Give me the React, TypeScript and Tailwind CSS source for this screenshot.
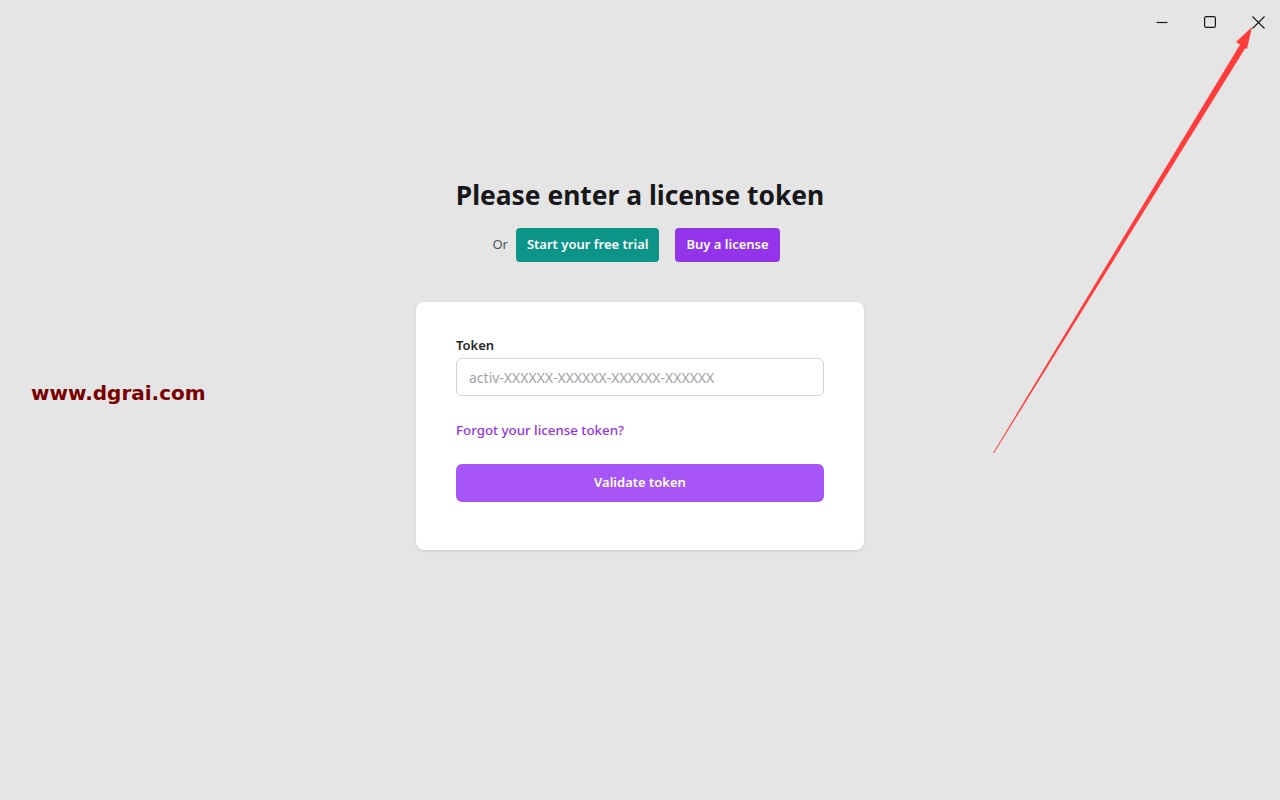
import {FC} from "react"

const WindowControls: FC = () => (
  <div className="absolute top-0 right-[-2px] flex items-center h-11">
    <button className="w-12 h-11 flex items-center justify-center">
      <svg width="12" height="12" viewBox="0 0 12 12"><path d="M0.5 6.5h11" stroke="#1a1a1a" strokeWidth="1.2"/></svg>
    </button>
    <button className="w-12 h-11 flex items-center justify-center">
      <svg width="12" height="12" viewBox="0 0 12 12"><rect x="0.6" y="0.6" width="10.8" height="10.8" rx="1.6" fill="none" stroke="#1a1a1a" strokeWidth="1.2"/></svg>
    </button>
    <button className="w-12 h-11 flex items-center justify-center">
      <svg width="13" height="13" viewBox="0 0 13 13"><path d="M0.5 0.5l12 12M12.5 0.5l-12 12" stroke="#1a1a1a" strokeWidth="1.2"/></svg>
    </button>
  </div>
)

const Arrow: FC = () => (
  <svg className="absolute top-0 left-0 pointer-events-none" width="1280" height="800" viewBox="0 0 1280 800">
    <polygon points="993,453 1241,43 1246,47 994,453" fill="#ff3b3b"/>
    <polygon points="1252,27 1247,49 1236,42" fill="#ff3b3b"/>
  </svg>
)

const App: FC = () => {
  return (
    <div className="relative w-full h-[800px] bg-[#e5e5e5] overflow-hidden" style={{fontFamily: '"Noto Sans", "Open Sans", sans-serif'}}>
      <WindowControls/>

      <div className="absolute left-[31px] top-[378px] text-[20px] font-bold text-[#7a0000]" style={{fontFamily: '"DejaVu Sans", sans-serif'}}>
        www.dgrai.com
      </div>

      <div className="flex flex-col items-center pt-[177px]">
        <h1 className="text-[26.4px] leading-[36px] font-bold text-[#18181b]">Please enter a license token</h1>

        <div className="flex items-center mt-[15px] pr-2">
          <span className="text-[13px] text-[#52525b] mr-2">Or</span>
          <button className="h-[34px] px-[11px] rounded bg-[#0d9488] text-white text-[13px] font-semibold">Start your free trial</button>
          <button className="h-[34px] px-[11px] ml-4 rounded bg-[#9333ea] text-white text-[13px] font-semibold">Buy a license</button>
        </div>

        <div className="mt-10 w-[448px] bg-white rounded-lg shadow-[0_1px_3px_rgba(0,0,0,0.12)] px-10 pt-[33px] pb-12">
          <label className="block text-[13px] font-semibold text-[#27272a] leading-5">Token</label>
          <input
            className="mt-[3px] w-full h-[38px] rounded-md border border-[#d4d4d8] px-3 text-sm outline-none placeholder:text-[#a1a1aa]"
            placeholder="activ-XXXXXX-XXXXXX-XXXXXX-XXXXXX"
          />
          <a className="block mt-6 text-[13.3px] font-medium text-[#9333ea] leading-5">Forgot your license token?</a>
          <button className="mt-6 w-full h-[38px] rounded-md bg-[#a855f7] text-white text-[13px] font-semibold">Validate token</button>
        </div>
      </div>

      <Arrow/>
    </div>
  )
}

export default App;
